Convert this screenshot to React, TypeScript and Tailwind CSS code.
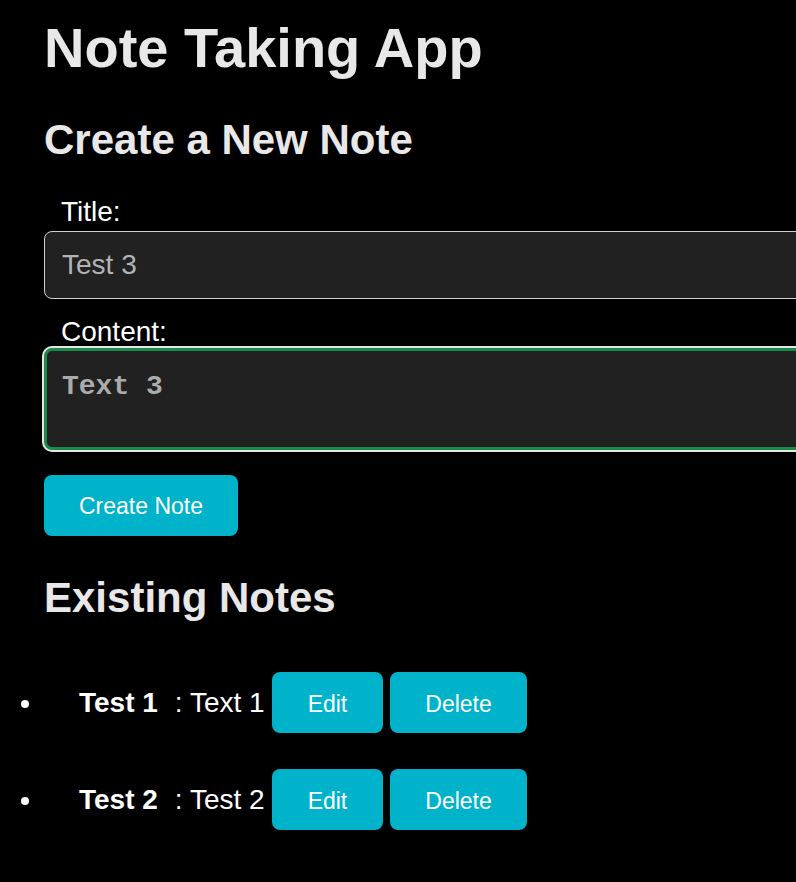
import React from "react";

const notes = [
  { title: "Test 1", content: "Text 1" },
  { title: "Test 2", content: "Test 2" },
];

export default function App() {
  const sans = { fontFamily: '"Liberation Sans", Arial, sans-serif' };
  return (
    <div
      className="w-[796px] h-[882px] overflow-hidden bg-black text-white"
      style={sans}
    >
      <div className="pl-[44px] pt-[16px]">
        <h1 className="text-[56px] leading-[64px] font-bold text-[#e8e8e8]">
          Note Taking App
        </h1>
        <h2 className="mt-[36px] text-[42px] leading-[48px] font-bold text-[#e8e8e8]">
          Create a New Note
        </h2>
        <form className="mt-[32px] flex flex-col" onSubmit={(e) => e.preventDefault()}>
          <label className="pl-[17px] text-[28px] leading-[32px] text-white">Title:</label>
          <input
            readOnly
            value="Test 3"
            className="mt-[3px] w-[800px] h-[68px] rounded-[8px] border border-[#cfcfcf] bg-[#212121] pl-[17px] text-[28px] text-[#b3b3b3] outline-none"
            style={sans}
          />
          <label className="mt-[17px] pl-[17px] text-[28px] leading-[32px] text-white">
            Content:
          </label>
          <textarea
            readOnly
            value="Text 3"
            className="w-[800px] h-[102px] resize-none rounded-[8px] border-[3px] border-[#1c8a4a] bg-[#212121] pl-[15px] pt-[20px] text-[28px] font-bold leading-[32px] text-[#ababab] outline-none shadow-[0_0_0_2px_#e6e6e6]"
            style={{ fontFamily: '"Liberation Mono", "Courier New", monospace' }}
          />
          <div className="mt-[25px]">
            <button
              type="button"
              className="h-[61px] rounded-[8px] bg-[#00b3ca] px-[35px] pt-[2px] text-[23px] text-white"
              style={sans}
            >
              Create Note
            </button>
          </div>
        </form>
        <h2 className="mt-[38px] text-[42px] leading-[48px] font-bold text-[#e8e8e8]">
          Existing Notes
        </h2>
      </div>
      <ul className="mt-[50px] flex flex-col gap-[36px]">
        {notes.map((n) => (
          <li key={n.title} className="flex items-center h-[61px]">
            <span className="ml-[21px] mt-[2px] w-[8px] h-[8px] rounded-full bg-white" />
            <strong className="ml-[50px] text-[28px] font-bold">{n.title}</strong>
            <span className="ml-[17px] text-[28px]">: {n.content}</span>
            <button
              type="button"
              className="ml-[7px] h-[61px] rounded-[8px] bg-[#00b3ca] px-[36px] pt-[3px] text-[23px] text-white"
              style={sans}
            >
              Edit
            </button>
            <button
              type="button"
              className="ml-[7px] h-[61px] rounded-[8px] bg-[#00b3ca] px-[35px] pt-[3px] text-[23px] text-white"
              style={sans}
            >
              Delete
            </button>
          </li>
        ))}
      </ul>
    </div>
  );
}
